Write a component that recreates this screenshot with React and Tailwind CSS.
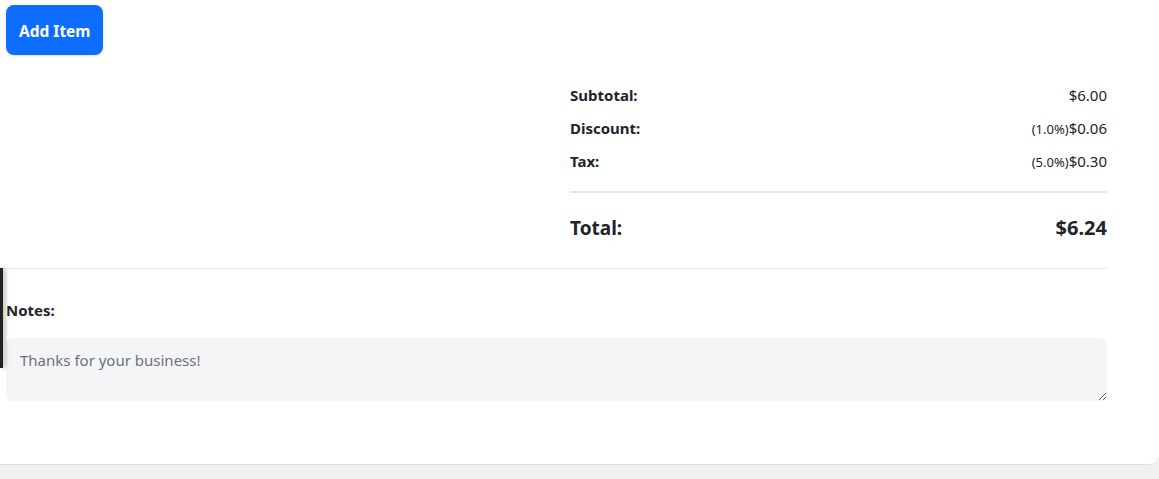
import React from "react";

export default function App() {
  const font = { fontFamily: '"Noto Sans", "Open Sans", sans-serif' };
  return (
    <div className="min-h-screen bg-[#f1f1f4]" style={font}>
      <div className="relative bg-white rounded-br-[10px] border-b border-[#dedfe3] pl-[6px] pr-[52px] pt-[5px] pb-[63px] text-[#212529]">
        <button className="h-[50px] px-[13px] pt-[3px] rounded-[8px] bg-[#0d6efd] text-white font-bold text-[15.5px] shadow-sm">
          Add Item
        </button>

        <div className="-ml-[6px] pl-[6px] border-b border-[#e5e7eb] pb-[26px] mt-[24px] flex justify-end">
          <div className="w-[537px]">
            <div className="h-[33px] flex items-center justify-between">
              <span className="font-bold text-[15px]">Subtotal:</span>
              <span className="text-[15px]">$6.00</span>
            </div>
            <div className="h-[33px] flex items-center justify-between">
              <span className="font-bold text-[15px]">Discount:</span>
              <span className="text-[15px]">
                <span className="text-[13px]">(1.0%)</span>$0.06
              </span>
            </div>
            <div className="h-[33px] flex items-center justify-between">
              <span className="font-bold text-[15px]">Tax:</span>
              <span className="text-[15px]">
                <span className="text-[13px]">(5.0%)</span>$0.30
              </span>
            </div>
            <div className="mt-[13px] border-t-2 border-[#e5e7eb]" />
            <div className="mt-[21px] h-[28px] flex items-center justify-between">
              <span className="font-bold text-[19px]">Total:</span>
              <span className="font-bold text-[20px]">$6.24</span>
            </div>
          </div>
        </div>

        <div className="pt-[31px]">
          <div className="font-bold text-[15px] leading-[20px] mb-[18px]">Notes:</div>
          <textarea
            className="block w-full h-[63px] bg-[#f4f5f7] rounded-[6px] px-[14px] py-[10px] text-[15px] leading-[24px] text-[#6b7280] outline-none"
            defaultValue="Thanks for your business!"
          />
        </div>

        <div className="absolute left-0 top-[268px] w-[3px] h-[100px] bg-[#222] shadow-[2px_0_4px_rgba(0,0,0,0.35)]" />
      </div>
    </div>
  );
}
